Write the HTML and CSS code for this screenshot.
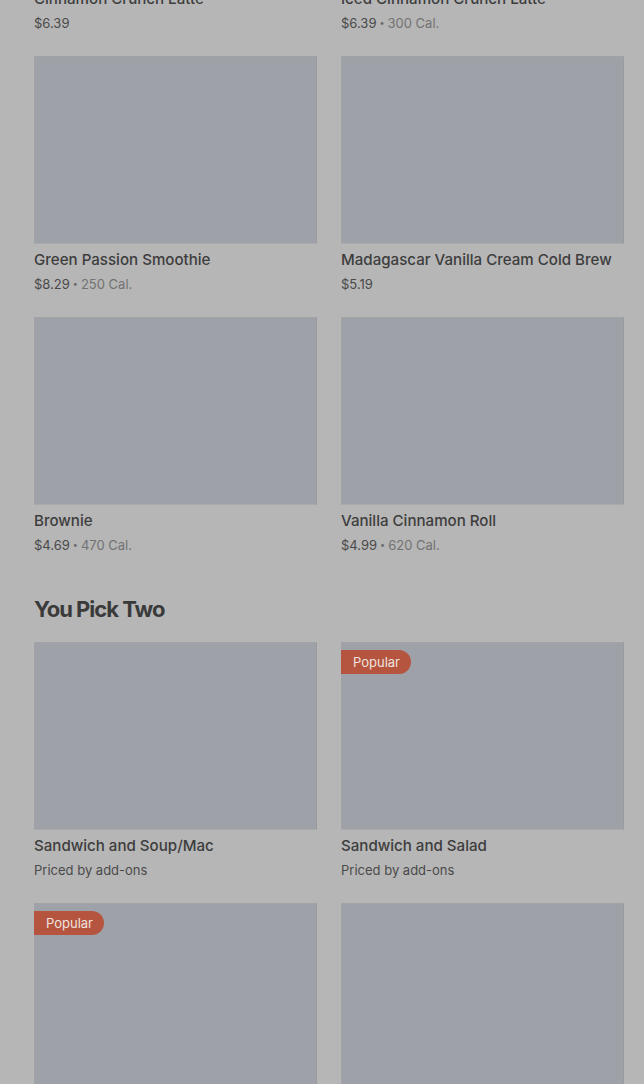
FILE: index.html
```html
<!DOCTYPE html>
<html lang="en">
<head>
<meta charset="utf-8">
<title>Menu</title>
<link rel="stylesheet" href="styles.css">
</head>
<body>
<main class="menu">
  <section class="section first">
    <div class="grid">
      <article class="item">
        <div class="thumb"></div>
        <h3 class="name">Cinnamon Crunch Latte</h3>
        <p class="meta"><span class="price">$6.39</span></p>
      </article>
      <article class="item">
        <div class="thumb"></div>
        <h3 class="name">Iced Cinnamon Crunch Latte</h3>
        <p class="meta"><span class="price">$6.39</span><span class="dot">•</span><span class="cal">300 Cal.</span></p>
      </article>
      <article class="item">
        <div class="thumb"></div>
        <h3 class="name">Green Passion Smoothie</h3>
        <p class="meta"><span class="price">$8.29</span><span class="dot">•</span><span class="cal">250 Cal.</span></p>
      </article>
      <article class="item">
        <div class="thumb"></div>
        <h3 class="name">Madagascar Vanilla Cream Cold Brew</h3>
        <p class="meta"><span class="price">$5.19</span></p>
      </article>
      <article class="item">
        <div class="thumb"></div>
        <h3 class="name">Brownie</h3>
        <p class="meta"><span class="price">$4.69</span><span class="dot">•</span><span class="cal">470 Cal.</span></p>
      </article>
      <article class="item">
        <div class="thumb"></div>
        <h3 class="name">Vanilla Cinnamon Roll</h3>
        <p class="meta"><span class="price">$4.99</span><span class="dot">•</span><span class="cal">620 Cal.</span></p>
      </article>
    </div>
  </section>

  <section class="section">
    <h2 class="section-title">You Pick Two</h2>
    <div class="grid">
      <article class="item">
        <div class="thumb"></div>
        <h3 class="name">Sandwich and Soup/Mac</h3>
        <p class="meta"><span class="price">Priced by add-ons</span></p>
      </article>
      <article class="item">
        <div class="thumb"><span class="badge">Popular</span></div>
        <h3 class="name">Sandwich and Salad</h3>
        <p class="meta"><span class="price">Priced by add-ons</span></p>
      </article>
      <article class="item">
        <div class="thumb"><span class="badge">Popular</span></div>
      </article>
      <article class="item">
        <div class="thumb"></div>
      </article>
    </div>
  </section>
</main>
</body>
</html>
```
FILE: styles.css
```css
html, body {
  margin: 0;
  padding: 0;
  background: #b6b6b6;
  overflow: hidden;
}

body {
  font-family: "Inter", "Roboto", "Liberation Sans", sans-serif;
  color: #3b3b3b;
}

.menu {
  padding: 0 20px 0 34px;
  height: 1084px;
  overflow: hidden;
}

.section.first {
  margin-top: -205px;
}

.grid {
  display: grid;
  grid-template-columns: 283px 283px;
  column-gap: 24px;
  row-gap: 23px;
}

.item {
  display: flex;
  flex-direction: column;
}

.thumb {
  position: relative;
  height: 188px;
  background: #9ea1a8;
  box-sizing: border-box;
  border: 1px solid #a2a3a7;
  border-right-color: #9a9b9d;
  border-bottom-color: #a9aaab;
}

.name {
  margin: 6px 0 0;
  font-size: 15.1px;
  line-height: 20px;
  font-weight: 500;
  color: #3d3d3d;
  white-space: nowrap;
}

.meta {
  margin: 4px 0 0;
  font-size: 13px;
  line-height: 20px;
  color: #4a4a4a;
  display: flex;
  align-items: center;
}

.dot {
  font-size: 9px;
  margin: 0 3px;
  color: #6a6a6a;
}

.cal {
  color: #727272;
}

.section-title {
  margin: 40px 0 19px;
  font-size: 22px;
  line-height: 28px;
  font-weight: 700;
  letter-spacing: -1px;
  color: #3a3a3a;
}

.badge {
  position: absolute;
  left: -1px;
  top: 7px;
  height: 24px;
  padding: 0 11px 0 12px;
  display: flex;
  align-items: center;
  background: #b5543f;
  color: #efe3df;
  font-size: 13px;
  border-radius: 0 12px 12px 0;
}
```
